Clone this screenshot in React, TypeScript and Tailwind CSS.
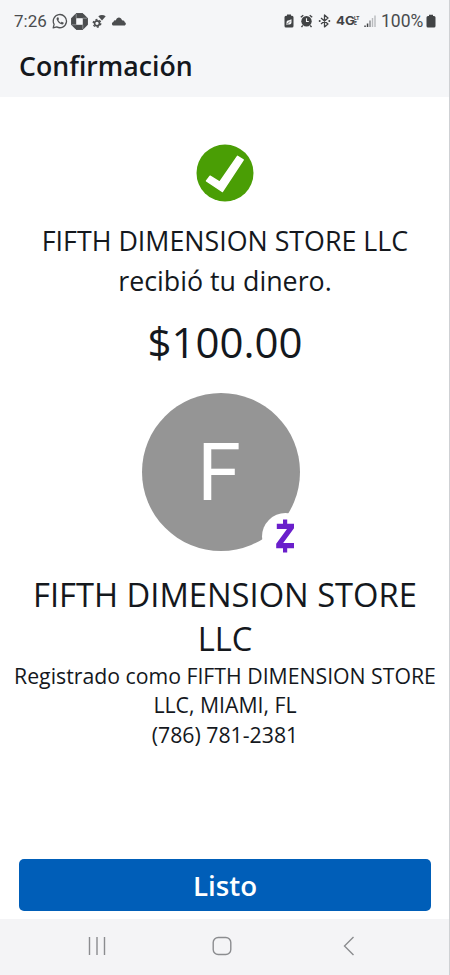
import React from 'react';

const WhatsAppIcon = () => (
  <svg width="16" height="16" viewBox="0 0 16 16" fill="none">
    <path d="M1.2 14.8l.9-3.5a6.6 6.6 0 1 1 2.6 2.6z" stroke="#505254" strokeWidth="1.3" strokeLinejoin="round" />
    <path
      d="M5.6 4.2c-.9.4-1.2 1.3-.9 2.3.7 2.3 2.4 4 4.7 4.8 1 .3 1.9-.1 2.2-.9.1-.4.1-.6-.2-.8l-1.3-.7c-.3-.1-.5 0-.7.2l-.5.6C7.7 9.2 6.8 8.2 6.3 7.1l.5-.6c.2-.2.2-.4.1-.7l-.5-1.3c-.2-.4-.5-.4-.8-.3z"
      fill="#505254"
    />
  </svg>
);

const ChaseIcon = () => (
  <svg width="17" height="17" viewBox="0 0 17 17">
    <path d="M5.2.6h6.600l4.600 4.600v6.600l-4.600 4.600H5.200L.6 11.800V5.200z" fill="#4b4d4f" stroke="#4b4d4f" strokeLinejoin="round" />
    <path d="M5.200 5.200h6.600v6.600H5.200z" fill="#f5f6f8" />
    <path d="M5.200 1v4.200M16 5.200h-4.200M11.800 16v-4.200M1 11.800h4.200" stroke="#a9abad" strokeWidth="0.7" />
  </svg>
);

const GearWifiIcon = () => (
  <svg width="15" height="15" viewBox="0 0 15 15" fill="none">
    <circle cx="5" cy="9.3" r="2.5" stroke="#4b4d4f" strokeWidth="1.7" />
    <circle cx="5" cy="9.3" r="3.8" stroke="#4b4d4f" strokeWidth="1.3" strokeDasharray="2 1.979" />
    <path d="M6.300 2.300c2.200-1.800 5.100-1.800 7.400 0L10 6.400z" fill="#4b4d4f" />
  </svg>
);

const CloudIcon = () => (
  <svg width="16" height="10" viewBox="0 0 16 10">
    <path d="M2.600 9.500C.6 9.300.3 6.600 2.400 5.900 2.900 4.600 4 4.200 4.900 4.400 5.800.7 9.900.5 11 4.300c2 0 2.600.9 2.700 1.900 1.800.6 1.500 3.200-.5 3.300z" fill="#4b4d4f" />
  </svg>
);

const BatterySaverIcon = () => (
  <svg width="10" height="14" viewBox="0 0 10 14">
    <path d="M3 .5h4v1.300h1a1.500 1.500 0 0 1 1.500 1.500v8.700A1.500 1.500 0 0 1 8 13.500H2A1.500 1.500 0 0 1 .5 12V3.300A1.500 1.500 0 0 1 2 1.800h1z" fill="#414345" />
    <path d="M7.500 5.200v3.300a2 2 0 0 1-2 2H3.300l-.8.7v-2A2.700 2.700 0 0 1 5 6.200z" fill="#f5f6f8" />
    <path d="M3.400 10l2.500-2.500" stroke="#414345" strokeWidth="0.8" />
  </svg>
);

const AlarmIcon = () => (
  <svg width="13" height="14" viewBox="0 0 13 14" fill="none">
    <circle cx="6.5" cy="7.2" r="5.2" fill="#414345" />
    <path d="M.8 3.300l2.500-2M12.200 3.300l-2.500-2M2.800 11.300l-1.300 1.800M10.200 11.300l1.300 1.800" stroke="#414345" strokeWidth="1.4" />
    <path d="M6.500 4.200v3.300h2.300" stroke="#f5f6f8" strokeWidth="1.1" />
  </svg>
);

const BluetoothIcon = () => (
  <svg width="13" height="14" viewBox="0 0 13 14" fill="none">
    <path d="M3 3.900l7 6-3.500 3V1l3.500 3-7 6" stroke="#414345" strokeWidth="1.3" strokeLinejoin="round" />
    <circle cx="1.700" cy="6.900" r="1" fill="#414345" />
    <circle cx="11.300" cy="6.900" r="1" fill="#414345" />
  </svg>
);

const SignalIcon = () => (
  <svg width="12" height="13" viewBox="0 0 12 13">
    <path d="M.3 10.500h1.500V12H.3zM2.800 8.500h1.500V12H2.800z" fill="#414345" />
    <path d="M5.300 5.500h1.400V12H5.300z" fill="#85878a" />
    <path d="M7.800 3h1.400v9H7.800zM10.300.5h1.400V12h-1.400z" fill="#b9bbbe" />
  </svg>
);

const BatteryIcon = () => (
  <svg width="10" height="14" viewBox="0 0 10 14">
    <path d="M3 .7h4V2h1a1.500 1.500 0 0 1 1.500 1.500V12A1.500 1.500 0 0 1 8 13.500H2A1.500 1.500 0 0 1 .5 12V3.500A1.500 1.500 0 0 1 2 2h1z" fill="#414345" />
  </svg>
);

const StatusBar = () => (
  <div className="flex h-[42px] items-center justify-between pl-[14px] pr-[13px] font-['Roboto',sans-serif] text-[#4a4c4e]">
    <div className="flex items-center">
      <span className="w-[38px] text-[17px] leading-5">7:26</span>
      <WhatsAppIcon />
      <span className="ml-[3px]"><ChaseIcon /></span>
      <span className="ml-[4px]"><GearWifiIcon /></span>
      <span className="ml-[4px]"><CloudIcon /></span>
    </div>
    <div className="flex items-center">
      <BatterySaverIcon />
      <span className="ml-[6px]"><AlarmIcon /></span>
      <span className="ml-[5px]"><BluetoothIcon /></span>
      <div className="ml-[5px] flex w-[24px] items-start text-[#414345]">
        <span className="w-[18px] origin-left scale-x-[1.15] font-['Inter',sans-serif] text-[11.5px] font-bold leading-[14px]">4G</span>
        <span className="flex flex-col pt-[2px] text-[5px] font-bold leading-[5px]">
          <span>LT</span>
          <span>E</span>
        </span>
      </div>
      <span className="ml-[4px]"><SignalIcon /></span>
      <span className="ml-[5px] w-[45px] text-[17.5px] leading-5">100%</span>
      <BatteryIcon />
    </div>
  </div>
);

const SuccessMark = () => (
  <svg width="58" height="58" viewBox="0 0 58 58">
    <circle cx="29" cy="29" r="28.5" fill="#4a9e05" />
    <path d="M10.500 37l3.600-4.800 9.600 6L41.500 12.300l5.700 3.500L26.300 47.500z" fill="#fff" stroke="#fff" strokeWidth="1.5" strokeLinejoin="round" />
  </svg>
);

const ZelleMark = () => (
  <svg width="20" height="34" viewBox="0 0 20 34">
    <path
      d="M8 .5h4.200v4.300H19v4.500L8.200 24H19v5.200h-6.800v4.300H8v-4.300H1.200v-4.500L12 10H1.800V4.800H8z"
      fill="#6a1fcb"
    />
  </svg>
);

const Avatar = () => (
  <div className="relative mx-auto h-[158px] w-[158px]">
    <div className="flex h-full w-full items-center justify-center rounded-full bg-[#959595] pr-[3px] pt-[3px] font-['Roboto',sans-serif] text-[79px] leading-none text-white">
      F
    </div>
    <div className="absolute left-[120px] top-[120px] flex h-[47px] w-[47px] items-center justify-center rounded-full bg-white pb-px">
      <ZelleMark />
    </div>
  </div>
);

const NavBar = () => (
  <nav className="grid h-[56px] grid-cols-3 items-center bg-[#f4f4f6] pb-[2px] pl-[34px] pr-[38px]">
    <button aria-label="Recientes" className="flex justify-center">
      <svg width="20" height="20" viewBox="0 0 20 20" stroke="#8b8c8f" strokeWidth="1.4">
        <path d="M2.500 1v18M10 1v18M17.500 1v18" />
      </svg>
    </button>
    <button aria-label="Inicio" className="flex justify-center">
      <svg width="20" height="20" viewBox="0 0 20 20" fill="none" stroke="#8b8c8f" strokeWidth="1.4">
        <rect x="1.2" y="1.5" width="17.6" height="17" rx="5" />
      </svg>
    </button>
    <button aria-label="Atrás" className="flex justify-center pl-[2px]">
      <svg width="12" height="20" viewBox="0 0 12 20" fill="none" stroke="#8b8c8f" strokeWidth="1.4">
        <path d="M10.500 1L1.500 10l9 9" />
      </svg>
    </button>
  </nav>
);

const App = () => {
  return (
    <div className="flex h-[975px] w-[450px] flex-col overflow-hidden border-r border-[#cfd1d4] bg-white font-['Open_Sans',sans-serif] text-[#14181d]">
      <header className="h-[97px] bg-[#f5f6f8]">
        <StatusBar />
        <h1 className="pl-[19px] text-[26.7px] font-semibold leading-[48px]">Confirmación</h1>
      </header>

      <main className="-mr-px flex flex-1 flex-col pt-[47px] text-center">
        <div className="flex justify-center">
          <SuccessMark />
        </div>
        <p className="mt-[19px] text-[26.8px] leading-[40px]">
          FIFTH DIMENSION STORE LLC
          <br />
          recibió tu dinero.
        </p>
        <p className="mt-[11px] text-[42px] leading-[60px]">$100.00</p>
        <div className="mt-[21px] pr-[9px]">
          <Avatar />
        </div>
        <h2 className="mt-[22px] text-[32.7px] leading-[44px]">
          FIFTH DIMENSION STORE
          <br />
          LLC
        </h2>
        <p className="mt-px text-[21.25px] leading-[28.5px]">
          Registrado como FIFTH DIMENSION STORE
          <br />
          LLC, MIAMI, FL
        </p>
        <p className="mt-px text-[21.25px] leading-[30px]">(786) 781-2381</p>
      </main>

      <div className="pb-2 pl-[19px] pr-[18px]">
        <button className="h-[52px] w-full rounded-[5px] bg-[#005eb8] pt-px text-[27.7px] font-semibold leading-[51px] text-white">
          Listo
        </button>
      </div>
      <NavBar />
    </div>
  );
};

export default App;
